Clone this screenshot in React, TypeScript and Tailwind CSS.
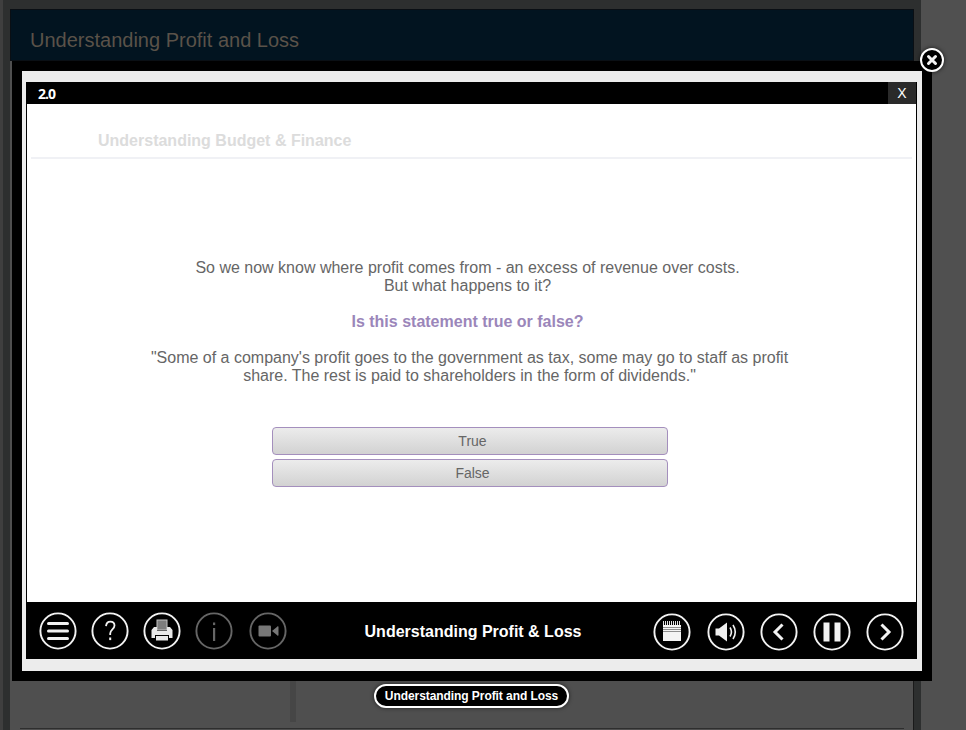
import React from "react";

const Ring = ({ children, dim }: { children: React.ReactNode; dim?: boolean }) => (
  <svg width="38" height="38" viewBox="0 0 38 38" className={dim ? "text-[#666666]" : "text-[#f2f2f2]"}>
    <circle cx="19" cy="19" r="17.6" fill="none" stroke="currentColor" strokeWidth="1.9" />
    {children}
  </svg>
);

const MenuIcon = () => (
  <Ring>
    <path d="M9.500 11.500h19M9.500 19h19M9.500 26.500h19" stroke="currentColor" strokeWidth="3" strokeLinecap="round" />
  </Ring>
);

const HelpIcon = () => (
  <Ring>
    <path d="M15 14.200c.3-3 2-4.600 4.300-4.600 2.500 0 4.200 1.700 4.200 4 0 3.700-4.300 4-4.300 8v1.400" fill="none" stroke="currentColor" strokeWidth="1.800" />
    <rect x="18.200" y="25.500" width="2" height="2.600" fill="currentColor" />
  </Ring>
);

const PrintIcon = () => (
  <Ring>
    <rect x="14" y="8" width="10" height="10" fill="#7d7d7d" stroke="#c4c4c4" strokeWidth="1" />
    <path d="M11 15h3v4h10v-4h3l2.500 3v8H26v-3H12v3H8.500v-8z" fill="#e8e8e8" />
    <rect x="13" y="24" width="12" height="4.500" fill="#e8e8e8" />
  </Ring>
);

const InfoIcon = () => (
  <Ring dim>
    <rect x="18" y="16" width="2.200" height="13" fill="currentColor" />
    <rect x="18" y="10.500" width="2.200" height="2.600" fill="currentColor" />
  </Ring>
);

const VideoIcon = () => (
  <Ring dim>
    <rect x="9.500" y="13.500" width="12.500" height="11" rx="1" fill="#777777" />
    <path d="M23 19l5.500-4.500v9z" fill="#777777" />
    <rect x="28" y="14.500" width="1.500" height="9" fill="#777777" />
  </Ring>
);

const NotesIcon = () => (
  <Ring>
    <rect x="10" y="12" width="18" height="16" fill="#f4f4f4" />
    <path d="M10 14.500h18M10 16.500h18M10 18.500h18" stroke="#8e8e8e" strokeWidth="1" />
    <path d="M10.500 8v4M12.500 8v4M14.500 8v4M16.500 8v4M18.500 8v4M20.500 8v4M22.500 8v4M24.500 8v4M26.500 8v4" stroke="#e0e0e0" strokeWidth="1" />
  </Ring>
);

const SoundIcon = () => (
  <Ring>
    <path d="M8.500 15.500h3.500L20 9.500v19L12 22.500H8.500z" fill="#f0f0f0" />
    <path d="M23 14.500c1.800 2.800 1.800 6.200 0 9M26 12c2.800 4.300 2.800 9.700 0 14" fill="none" stroke="currentColor" strokeWidth="1.600" />
  </Ring>
);

const PrevIcon = () => (
  <Ring>
    <path d="M22.500 11.500L15 19l7.500 7.500" fill="none" stroke="currentColor" strokeWidth="3" />
  </Ring>
);

const PauseIcon = () => (
  <Ring>
    <rect x="10.500" y="9.500" width="6" height="19" fill="currentColor" />
    <rect x="21.500" y="9.500" width="6" height="19" fill="currentColor" />
  </Ring>
);

const NextIcon = () => (
  <Ring>
    <path d="M15.500 11.500L23 19l-7.500 7.500" fill="none" stroke="currentColor" strokeWidth="3" />
  </Ring>
);

export default function App() {
  return (
    <div className="relative flex h-[730px] w-[966px] overflow-hidden bg-[#505050] font-['Liberation_Sans',Arial,sans-serif]">
      {/* page behind the lightbox */}
      <div className="flex h-full w-[921px] flex-col border-l-[3px] border-[#3f3f3f] bg-[#2d2f2f] pl-[7px] pr-[7px] pt-[9px]">
        <div className="flex h-[52px] shrink-0 items-center border border-[#0a0f14] bg-[#021420] pl-[19px] pt-[9px] text-[20px] text-[#5a5249]">
          Understanding Profit and Loss
        </div>
        <div className="flex-1 border-r border-[#1a1a1a] bg-[#4f4f4f] pt-[620px]">
          <div className="ml-[280px] h-[41px] w-[6px] bg-[#464646]" />
          <div className="ml-[10px] mr-[9px] mt-[6px] h-px bg-[#2e2e2e]" />
        </div>
      </div>

      {/* lightbox */}
      <div className="absolute left-[12px] top-[61px] h-[620px] w-[920px] bg-black p-[10px]">
        <div className="h-[600px] w-[900px] bg-[#ececec] pb-[11px] pl-[4px] pr-[5px] pt-[11px]">
          <div className="flex h-[577px] flex-col bg-black px-px">
            <div className="flex h-[22px] shrink-0 items-center justify-between pl-[11px]">
              <span className="font-['Open_Sans',sans-serif] text-[14px] font-bold tracking-[-1px] text-white">2.0</span>
              <span className="flex h-[22px] w-[28px] items-center justify-center bg-[#2a2a2a] text-[14px] text-white">X</span>
            </div>

            <div className="flex h-[498px] shrink-0 flex-col bg-white">
              <div className="mx-[4px] mt-[25px] h-[30px] border-b-[2px] border-[#f0f1f5] pl-[67px] text-[16px] font-bold leading-[24px] text-[#dcdcdc]">
                Understanding Budget &amp; Finance
              </div>
              <div className="mt-[100px] flex flex-col items-center text-center text-[16px] leading-[18px] text-[#666666]">
                <p className="mr-[8px]">
                  So we now know where profit comes from - an excess of revenue over costs.
                  <br />
                  But what happens to it?
                </p>
                <p className="mr-[8px] mt-[18px] font-bold text-[#9b86ba]">Is this statement true or false?</p>
                <p className="mr-[4px] mt-[18px]">
                  "Some of a company's profit goes to the government as tax, some may go to staff as profit
                  <br />
                  share. The rest is paid to shareholders in the form of dividends."
                </p>
              </div>
              <div className="ml-[245px] mt-[42px] flex w-[396px] flex-col gap-[4px] text-[14px] text-[#666666]">
                <button className="h-[28px] rounded-[4px] border border-[#a48fbd] bg-gradient-to-b from-[#ececec] to-[#d2d2d2] pl-[5px]">True</button>
                <button className="h-[28px] rounded-[4px] border border-[#a48fbd] bg-gradient-to-b from-[#ececec] to-[#d2d2d2] pl-[5px]">False</button>
              </div>
            </div>

            <div className="flex h-[57px] items-center pl-[12px] pr-[12px] pt-[3px]">
              <div className="flex gap-[14px]">
                <MenuIcon />
                <HelpIcon />
                <PrintIcon />
                <InfoIcon />
                <div className="mb-[2px] ml-[2px]">
                  <VideoIcon />
                </div>
              </div>
              <div className="flex-1 pl-[6px] text-center text-[16px] font-bold text-white">Understanding Profit &amp; Loss</div>
              <div className="flex gap-[15px]">
                <div className="mr-[1px]">
                  <NotesIcon />
                </div>
                <SoundIcon />
                <PrevIcon />
                <PauseIcon />
                <NextIcon />
              </div>
            </div>
          </div>
        </div>
      </div>

      {/* close button */}
      <div className="absolute left-[920px] top-[48px] flex h-[24px] w-[24px] items-center justify-center rounded-full border-[2.500px] border-white bg-black shadow-[0_0_4px_rgba(0,0,0,0.7)]">
        <svg width="12" height="12" viewBox="0 0 12 12">
          <path d="M2.500 2.500l7 7M9.500 2.500l-7 7" stroke="#f4f4f4" strokeWidth="3" strokeLinecap="round" />
        </svg>
      </div>

      {/* caption */}
      <div className="absolute left-[374px] top-[684px] flex h-[24px] w-[195px] items-center justify-center rounded-full border-[2px] border-white bg-black text-[12px] font-bold tracking-[-0.07px] text-white shadow-[0_0_4px_rgba(0,0,0,0.6)]">
        Understanding Profit and Loss
      </div>
    </div>
  );
}
